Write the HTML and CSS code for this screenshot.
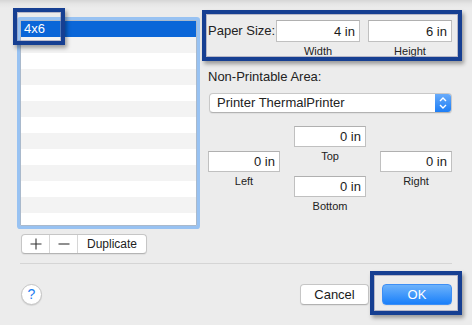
FILE: index.html
```html
<!DOCTYPE html>
<html lang="en">
<head>
    <meta charset="UTF-8">
    <title>Paper Size</title>
    <link rel="stylesheet" href="styles.css">
</head>
<body>
    <div class="dialog">
        <div class="main">
            <div class="left">
                <div class="list">
                    <div class="row selected">4x6</div>
                    <div class="row"></div>
                    <div class="row"></div>
                    <div class="row"></div>
                    <div class="row"></div>
                    <div class="row"></div>
                    <div class="row"></div>
                    <div class="row"></div>
                    <div class="row"></div>
                    <div class="row"></div>
                    <div class="row"></div>
                    <div class="row"></div>
                    <div class="row"></div>
                </div>
                <div class="segments">
                    <div class="seg seg-icon">
                        <svg width="12" height="12" viewBox="0 0 12 12"><path d="M6 0.5V11.5M0.5 6H11.5" stroke="#333" stroke-width="1.1" fill="none"/></svg>
                    </div>
                    <div class="seg seg-icon">
                        <svg width="12" height="12" viewBox="0 0 12 12"><path d="M0.5 6H11.5" stroke="#333" stroke-width="1.1" fill="none"/></svg>
                    </div>
                    <div class="seg seg-text">Duplicate</div>
                </div>
            </div>

            <div class="right">
                <div class="paper-row">
                    <span class="label">Paper Size:</span>
                    <div class="field-group">
                        <div class="field wide">4 in</div>
                        <div class="sub">Width</div>
                    </div>
                    <div class="field-group">
                        <div class="field wide">6 in</div>
                        <div class="sub">Height</div>
                    </div>
                </div>

                <div class="heading">Non-Printable Area:</div>

                <div class="popup">
                    <span class="popup-text">Printer ThermalPrinter</span>
                    <span class="stepper">
                        <svg width="8" height="14" viewBox="0 0 8 14"><path d="M1 5L4 2L7 5M1 9L4 12L7 9" stroke="#fff" stroke-width="1.4" fill="none"/></svg>
                    </span>
                </div>

                <div class="margins">
                    <div class="margin-col side">
                        <div class="field">0 in</div>
                        <div class="sub">Left</div>
                    </div>
                    <div class="margin-col">
                        <div class="field">0 in</div>
                        <div class="sub">Top</div>
                        <div class="field bottom-field">0 in</div>
                        <div class="sub">Bottom</div>
                    </div>
                    <div class="margin-col side">
                        <div class="field">0 in</div>
                        <div class="sub">Right</div>
                    </div>
                </div>
            </div>
        </div>

        <div class="separator"></div>

        <div class="footer">
            <div class="help">?</div>
            <div class="actions">
                <div class="btn">Cancel</div>
                <div class="btn primary">OK</div>
            </div>
        </div>
    </div>

    <!-- callout boxes drawn over the dialog -->
    <div class="callout callout-name"></div>
    <div class="callout callout-size"></div>
    <div class="callout callout-ok"></div>
</body>
</html>
```

FILE: styles.css
```css
body {
    margin: 0;
    width: 472px;
    height: 325px;
    overflow: hidden;
    position: relative;
    background: linear-gradient(to bottom, #d6d6d6 0px, #e6e6e6 4px, #ececec 8px, #ececec 100%);
    font-family: "Liberation Sans", Arial, sans-serif;
    color: #222;
}

.dialog {
    padding: 20px 20px 0 20px;
}

.main {
    display: flex;
    gap: 11px;
    height: 234px;
}

/* left side: list + segmented buttons */
.left {
    width: 177px;
    display: flex;
    flex-direction: column;
}

.list {
    height: 206px;
    box-sizing: border-box;
    border: 1px solid #a9b9cc;
    background: #fff;
    box-shadow: 0 0 0 3px #98c2f2;
    border-radius: 1px;
    overflow: hidden;
}

.row {
    height: 16px;
    line-height: 16px;
    font-size: 13px;
    padding-left: 3px;
}

.row:nth-child(even) {
    background: #f3f3f3;
}

.row.selected {
    background: #0a66d8;
    color: #fff;
}

.segments {
    margin-top: 8px;
    margin-left: 1px;
    display: flex;
    width: 126px;
    height: 20px;
    box-sizing: border-box;
    border: 1px solid #c6c6c6;
    border-bottom-color: #b4b4b4;
    border-radius: 4px;
    background: #fff;
    box-shadow: 0 1px 1px rgba(0, 0, 0, 0.06);
}

.seg {
    display: flex;
    align-items: center;
    justify-content: center;
    border-right: 1px solid #d6d6d6;
}

.seg-icon {
    width: 27px;
}

.seg-text {
    flex: 1;
    border-right: none;
    font-size: 12px;
    color: #222;
}

/* right side */
.right {
    width: 244px;
    display: flex;
    flex-direction: column;
}

.paper-row {
    display: flex;
    align-items: flex-start;
}

.label {
    font-size: 13px;
    line-height: 22px;
    width: 68px;
}

.field-group {
    display: flex;
    flex-direction: column;
    align-items: center;
    margin-right: 8px;
}

.field-group:last-child {
    margin-right: 0;
}

.field {
    width: 72px;
    height: 21px;
    box-sizing: border-box;
    background: #fff;
    border: 1px solid #c0c0c0;
    border-top-color: #b0b0b0;
    font-size: 13px;
    line-height: 20px;
    text-align: right;
    padding-right: 4px;
    color: #1a1a1a;
}

.field.wide {
    width: 84px;
    height: 22px;
    line-height: 21px;
}

.sub {
    font-size: 11px;
    line-height: 13px;
    margin-top: 3px;
    color: #222;
}

.heading {
    font-size: 13px;
    line-height: 16px;
    margin-top: 11px;
}

.popup {
    margin-top: 8px;
    margin-left: 1px;
    height: 20px;
    box-sizing: border-box;
    display: flex;
    align-items: stretch;
    background: #fff;
    border: 1px solid #c8c8c8;
    border-bottom-color: #b2b2b2;
    border-radius: 4px;
    box-shadow: 0 1px 1px rgba(0, 0, 0, 0.06);
    overflow: hidden;
}

.popup-text {
    flex: 1;
    font-size: 13px;
    line-height: 18px;
    padding-left: 7px;
}

.stepper {
    width: 16px;
    display: flex;
    align-items: center;
    justify-content: center;
    background: linear-gradient(to bottom, #68abfa, #1c7ef6);
}

.margins {
    margin-top: 13px;
    display: flex;
    justify-content: space-between;
}

.margin-col {
    display: flex;
    flex-direction: column;
    align-items: center;
}

.margin-col.side {
    padding-top: 25px;
}

.bottom-field {
    margin-top: 13px;
}

.separator {
    height: 1px;
    background: #d5d5d5;
    margin-top: 9px;
}

.footer {
    display: flex;
    justify-content: space-between;
    align-items: center;
    margin-top: 20px;
}

.help {
    width: 21px;
    height: 21px;
    margin-left: 1px;
    box-sizing: border-box;
    border-radius: 50%;
    background: #fff;
    border: 1px solid #c4c4c4;
    box-shadow: 0 1px 1px rgba(0, 0, 0, 0.1);
    color: #1b7cf0;
    font-size: 14px;
    line-height: 19px;
    text-align: center;
}

.actions {
    display: flex;
    gap: 13px;
}

.btn {
    width: 69px;
    height: 21px;
    box-sizing: border-box;
    background: #fff;
    border: 1px solid #c6c6c6;
    border-bottom-color: #b2b2b2;
    border-radius: 4px;
    box-shadow: 0 1px 1px rgba(0, 0, 0, 0.06);
    font-size: 13px;
    line-height: 19px;
    text-align: center;
    color: #1a1a1a;
}

.btn.primary {
    width: 70px;
    border-color: #3d8ff5;
    background: linear-gradient(to bottom, #6cb2fb, #1a80fa);
    color: #fff;
}

/* dark blue annotation boxes */
.callout {
    position: absolute;
    box-sizing: border-box;
    border: 4px solid #163f92;
    box-shadow: 2px 3px 4px rgba(0, 0, 0, 0.35), inset 0 0 0 1px rgba(140, 140, 170, 0.55);
}

.callout-name {
    left: 13px;
    top: 8px;
    width: 52px;
    height: 37px;
}

.callout-size {
    left: 202px;
    top: 10px;
    width: 260px;
    height: 51px;
}

.callout-ok {
    left: 370px;
    top: 271px;
    width: 92px;
    height: 44px;
}
```
